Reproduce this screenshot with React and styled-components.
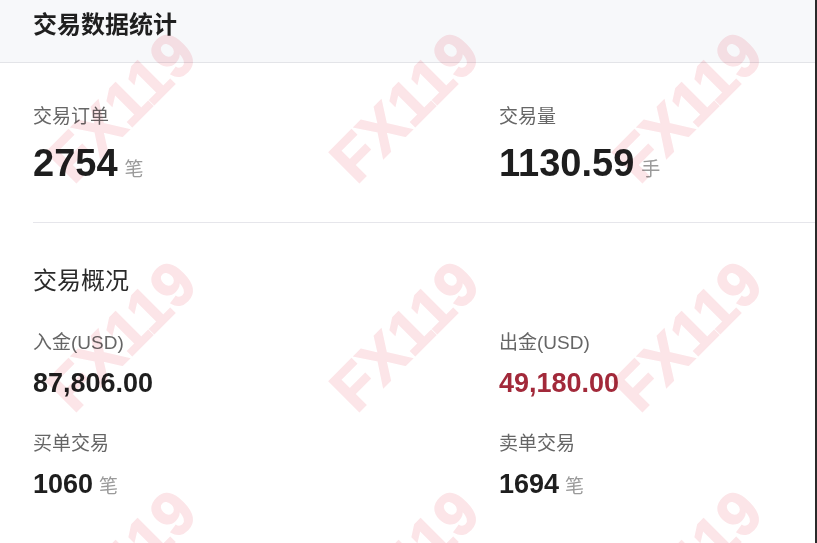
import React from "react";
import styled, { createGlobalStyle } from "styled-components";

const GlobalStyle = createGlobalStyle`
  html, body {
    margin: 0;
    padding: 0;
    background: #ffffff;
  }
  body {
    font-family: "Liberation Sans", Arial, "Noto Sans CJK SC", sans-serif;
    -webkit-font-smoothing: antialiased;
  }
`;

const summary = [
  { label: "交易订单", value: "2754", unit: "笔" },
  { label: "交易量", value: "1130.59", unit: "手" },
];

const overview = [
  { label: "入金(USD)", value: "87,806.00" },
  { label: "出金(USD)", value: "49,180.00", tone: "out" },
  { label: "买单交易", value: "1060", unit: "笔" },
  { label: "卖单交易", value: "1694", unit: "笔" },
];

// watermark centres, one grid step apart
const marks = [];
[107, 336, 565].forEach((y) => {
  [122, 405, 688].forEach((x) => marks.push({ x, y }));
});

const App = () => {
  return (
    <>
      <GlobalStyle />
      <Page>
        <Header>
          <h1>交易数据统计</h1>
        </Header>

        <Summary>
          {summary.map((item) => (
            <Stat key={item.label} $gap={11}>
              <Label>{item.label}</Label>
              <BigValue>
                {item.value}
                <Unit $big>{item.unit}</Unit>
              </BigValue>
            </Stat>
          ))}
        </Summary>

        <Overview>
          <h2>交易概况</h2>
          <OverviewGrid>
            {overview.map((item) => (
              <Stat key={item.label} $gap={11}>
                <Label>{item.label}</Label>
                <Value $tone={item.tone}>
                  {item.value}
                  {item.unit && <Unit>{item.unit}</Unit>}
                </Value>
              </Stat>
            ))}
          </OverviewGrid>
        </Overview>

        <Watermarks aria-hidden="true">
          {marks.map((m, i) => (
            <Mark key={i} style={{ left: m.x, top: m.y }}>
              FX119
            </Mark>
          ))}
        </Watermarks>
      </Page>
    </>
  );
};

const Page = styled.div`
  position: relative;
  width: 815px;
  height: 100vh;
  overflow: hidden;
  background: #ffffff;
  border-right: 2px solid #2a2a2a;
`;

const Header = styled.header`
  height: 63px;
  box-sizing: border-box;
  padding: 11px 0 0 33px;
  background: #f7f8fa;
  border-bottom: 1px solid #e3e4e8;
  h1 {
    margin: 0;
    font-size: 24px;
    line-height: 28px;
    font-weight: 700;
    color: #1f1f1f;
  }
`;

const Summary = styled.section`
  display: grid;
  grid-template-columns: 466px 1fr;
  padding: 41px 0 37px;
  margin-left: 33px;
  border-bottom: 1px solid #e6e6eb;
`;

const Stat = styled.div`
  display: flex;
  flex-direction: column;
  gap: ${(p) => p.$gap}px;
`;

const Label = styled.div`
  height: 26px;
  font-size: 19px;
  line-height: 26px;
  color: #666666;
`;

const BigValue = styled.div`
  display: flex;
  align-items: baseline;
  height: 44px;
  font-size: 38px;
  line-height: 44px;
  font-weight: 700;
  color: #1e1e1e;
`;

const Value = styled.div`
  display: flex;
  align-items: baseline;
  height: 32px;
  font-size: 27px;
  line-height: 32px;
  font-weight: 700;
  color: ${(p) => (p.$tone === "out" ? "#a2293a" : "#1e1e1e")};
`;

const Unit = styled.span`
  margin-left: ${(p) => (p.$big ? "7px" : "6px")};
  font-size: 19px;
  line-height: 1;
  font-weight: 400;
  color: #9a9a9a;
`;

const Overview = styled.section`
  padding: 42px 0 0 33px;
  h2 {
    margin: 0 0 33px;
    font-size: 24px;
    line-height: 32px;
    font-weight: 400;
    color: #2a2a2a;
  }
`;

const OverviewGrid = styled.div`
  display: grid;
  grid-template-columns: 466px 1fr;
  row-gap: 32px;
`;

const Watermarks = styled.div`
  position: absolute;
  inset: 0;
  pointer-events: none;
`;

const Mark = styled.span`
  position: absolute;
  transform: translate(-50%, -50%) rotate(-45deg);
  font-family: "Liberation Sans", Arial, sans-serif;
  font-size: 62px;
  font-weight: 700;
  line-height: 1;
  white-space: nowrap;
  color: #fce5e8;
  -webkit-text-stroke: 1.5px #fce5e8;
  mix-blend-mode: multiply;
`;

export default App;
